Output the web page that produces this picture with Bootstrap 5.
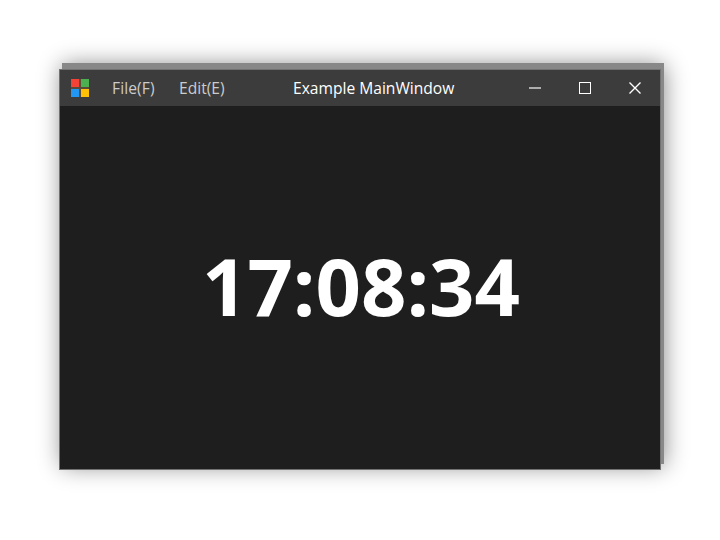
<!DOCTYPE html>
<html lang="en">
<head>
<meta charset="utf-8">
<title>Example MainWindow</title>
<link href="https://cdn.jsdelivr.net/npm/bootstrap@5.3.0/dist/css/bootstrap.min.css" rel="stylesheet">
<style>
body { width: 720px; height: 540px; background: #fff; font-family: "Open Sans", "Noto Sans", sans-serif; }
.app-window { width: 602px; height: 401px; margin: 69px 0 0 59px; border: 1px solid #727272; background: #1e1e1e;
  box-shadow: 3px -6px 0 #888, 3px -4px 22px rgba(0,0,0,.48); }
.title-bar { height: 36px; background: #3c3c3c; font-size: 15.6px; line-height: 36px; }
.app-logo { width: 18px; margin-left: 11px; }
.app-menu { color: #ccc; margin-left: 23px; white-space: nowrap; }
.menu-file { width: 67px; letter-spacing: .1px; }
.menu-edit { width: 58px; }
.app-title { color: #fff; width: 172px; margin-left: 56px; white-space: nowrap; }
.win-btn { width: 50px; height: 36px; }
.clock { font-size: 79.5px; line-height: 1; font-weight: 700; color: #fff; padding: 0 0 4px 2px; white-space: nowrap; }
</style>
<script src="https://cdn.jsdelivr.net/npm/bootstrap@5.3.0/dist/js/bootstrap.bundle.min.js"></script>
</head>
<body class="overflow-hidden d-flex align-items-start">
<main class="app-window d-flex flex-column flex-shrink-0">
  <header class="title-bar d-flex align-items-center flex-shrink-0">
    <svg class="app-logo flex-shrink-0" width="18" height="18" shape-rendering="crispEdges">
      <rect width="18" height="18" fill="#5a4a38"/>
      <rect width="8" height="8" fill="#f44336"/><rect x="10" width="8" height="8" fill="#4caf50"/>
      <rect y="10" width="8" height="8" fill="#2196f3"/><rect x="10" y="10" width="8" height="8" fill="#ffc107"/>
    </svg>
    <nav class="app-menu d-flex"><span class="menu-file">File(F)</span><span class="menu-edit">Edit(E)</span></nav>
    <div class="app-title">Example MainWindow</div>
    <div class="d-flex ms-auto">
      <svg class="win-btn" shape-rendering="crispEdges"><rect x="19" y="17" width="12" height="2" fill="#adadad"/></svg>
      <svg class="win-btn" shape-rendering="crispEdges"><rect x="19.5" y="12.5" width="11" height="11" fill="none" stroke="#fff"/></svg>
      <svg class="win-btn"><path d="M19.5 12.5l11 11M30.5 12.5l-11 11" stroke="#fff" stroke-width="1.4"/></svg>
    </div>
  </header>
  <section class="flex-grow-1 d-flex justify-content-center align-items-center"><div class="clock">17:08:34</div></section>
</main>
</body>
</html>
